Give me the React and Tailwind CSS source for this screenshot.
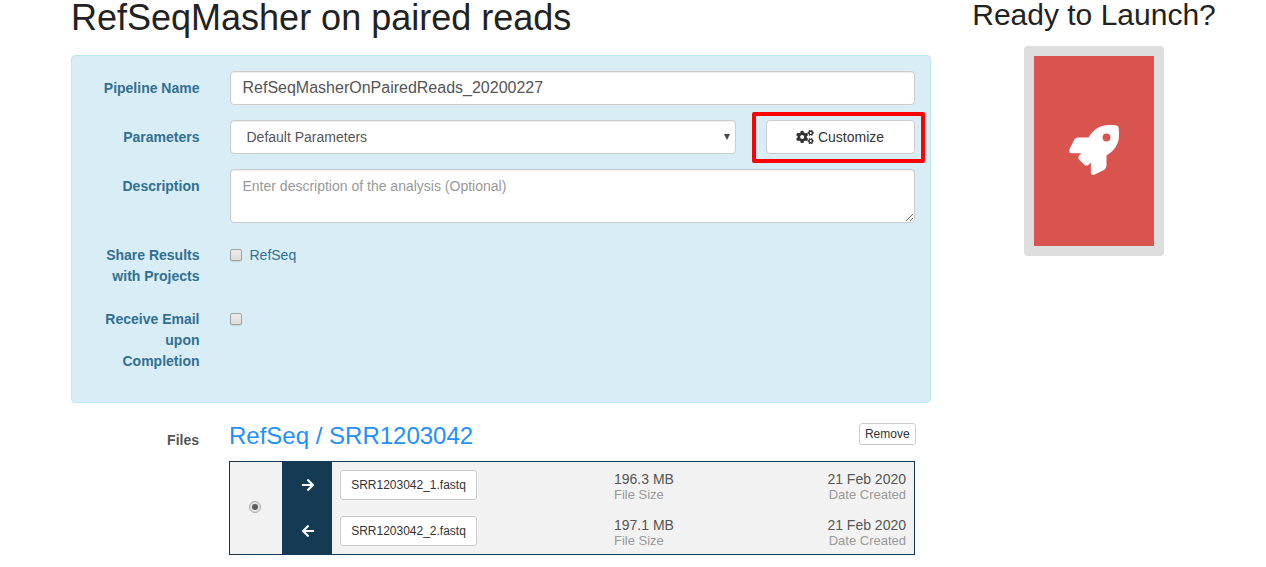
import React from "react";
import { FaRocket, FaCogs, FaArrowRight, FaArrowLeft } from "react-icons/fa";

const files = [
  { name: "SRR1203042_1.fastq", size: "196.3 MB", date: "21 Feb 2020", forward: true },
  { name: "SRR1203042_2.fastq", size: "197.1 MB", date: "21 Feb 2020", forward: false },
];

function Label({ children, className = "" }) {
  return (
    <div className={`w-[128px] shrink-0 pr-[0.5px] text-right text-[14px] leading-[21px] font-bold text-[#31708f] ${className}`}>
      {children}
    </div>
  );
}

function Checkbox() {
  return (
    <input
      type="checkbox"
      className="m-0 h-[12px] w-[12px] shrink-0 appearance-none rounded-[2px] border border-[#a3a3a3] bg-linear-to-b from-[#ededed] to-[#dcdcdc] shadow-[0_1px_0_rgba(0,0,0,0.08)]"
    />
  );
}

const field = "rounded-[4px] border border-[#cccccc] bg-white shadow-[inset_0_1px_1px_rgba(0,0,0,0.075)]";

export default function App() {
  return (
    <div className="flex h-[567px] w-[1266px] overflow-hidden bg-white font-['Liberation_Sans',Arial,sans-serif] text-[14px] text-[#555555]">
      <main className="ml-[71px] w-[860px] shrink-0">
        <h1 className="h-[55px] text-[36px] leading-[36px] whitespace-nowrap text-[#222222]">RefSeqMasher on paired reads</h1>

        <section className="h-[348px] rounded-[4px] border border-[#bce8f1] bg-[#d9edf7] pt-[15px] pr-[15px]">
          <div className="flex h-[34px] justify-between">
            <Label className="pt-[7px]">Pipeline Name</Label>
            <input
              type="text"
              defaultValue="RefSeqMasherOnPairedReads_20200227"
              className={`${field} h-[34px] w-[685px] pr-[12px] pl-[11.5px] text-[16px] leading-[22px] text-[#555555] outline-none`}
            />
          </div>

          <div className="mt-[15px] flex h-[34px] justify-between">
            <Label className="pt-[7px]">Parameters</Label>
            <div className="flex w-[685px] justify-between">
              <div className={`${field} flex h-[34px] w-[506px] items-center justify-between pr-[5px] pl-[15.5px]`}>
                <span className="leading-[20px]">Default Parameters</span>
                <svg width="6" height="6" viewBox="0 0 6 6" className="fill-[#444444]">
                  <path d="M0 0h6L3 6z" />
                </svg>
              </div>
              <div className="-mt-[8px] -mr-[10px] h-[51px] w-[173px] shrink-0 rounded-[2px] border-4 border-[#ff0000] pt-[4px] pl-[10px]">
                <button className="flex h-[34px] w-[149px] items-center justify-center gap-[3.5px] rounded-[4px] border border-[#cccccc] bg-white pr-[0.5px] text-[14px] leading-[20px] text-[#333333]">
                  <FaCogs className="h-[14px] w-[18px]" />
                  Customize
                </button>
              </div>
            </div>
          </div>

          <div className="mt-[15px] flex h-[54px] justify-between">
            <Label className="pt-[7px]">Description</Label>
            <textarea
              placeholder="Enter description of the analysis (Optional)"
              className={`${field} h-[54px] w-[685px] resize-y py-[6px] pr-[12px] pl-[11.5px] text-[14px] leading-[20px] outline-none placeholder:text-[#999999]`}
            />
          </div>

          <div className="mt-[22px] flex h-[42px]">
            <Label>
              Share Results
              <br />
              with Projects
            </Label>
            <label className="ml-[30px] flex h-[21px] items-start gap-[7.5px] pt-[4px] text-[#31708f]">
              <Checkbox />
              <span className="-mt-[4px] leading-[21px]">RefSeq</span>
            </label>
          </div>

          <div className="mt-[22px] flex h-[63px]">
            <Label>
              Receive Email
              <br />
              upon
              <br />
              Completion
            </Label>
            <div className="ml-[30px] flex h-[21px] items-start pt-[4px]">
              <Checkbox />
            </div>
          </div>
        </section>

        <section className="flex pt-[20px] pr-[16px]">
          <div className="w-[128px] pt-[7px] text-right text-[14px] leading-[20px] font-bold">Files</div>
          <div className="ml-[30px] w-[686px] shrink-0">
            <div className="flex h-[38px] justify-between">
              <h2 className="text-[24px] leading-[26px] text-[#1e90ff]">RefSeq / SRR1203042</h2>
              <button className="-mr-[1px] h-[22px] w-[57px] rounded-[3px] border border-[#cccccc] bg-white pr-[0.5px] text-[12px] leading-[18px] text-[#333333]">
                Remove
              </button>
            </div>
            <div className="flex h-[94px] border border-[#143b53] bg-[#f2f2f2]">
              <div className="flex w-[52px] items-start justify-center pt-[39px] pr-[2px]">
                <span className="flex h-[12px] w-[12px] items-center justify-center rounded-full border border-[#a9a9a9] bg-[#e3e3e3]">
                  <span className="h-[6px] w-[6px] rounded-full bg-[#5c5c5c]" />
                </span>
              </div>
              <div className="grow">
                {files.map((file) => (
                  <div key={file.name} className="flex h-[46px]">
                    <div className="flex w-[50px] items-center justify-center bg-[#143b53] pl-[1px] text-white">
                      {file.forward ? <FaArrowRight size={14} /> : <FaArrowLeft size={14} />}
                    </div>
                    <div className="w-[282px] pt-[8px] pl-[8px]">
                      <button className="h-[30px] w-[137px] rounded-[3px] border border-[#cccccc] bg-white text-[12px] leading-[18px] text-[#333333]">
                        {file.name}
                      </button>
                    </div>
                    <div className="flex grow justify-between pt-[9px] pr-[8px]">
                      <div>
                        <div className="text-[14px] leading-[17px]">{file.size}</div>
                        <div className="-mt-[1px] text-[13px] leading-[15px] text-[#999999]">File Size</div>
                      </div>
                      <div className="text-right">
                        <div className="text-[14px] leading-[17px]">{file.date}</div>
                        <div className="-mt-[1px] text-[13px] leading-[15px] text-[#999999]">Date Created</div>
                      </div>
                    </div>
                  </div>
                ))}
              </div>
            </div>
          </div>
        </section>
      </main>

      <aside className="ml-[30px] flex w-[266px] flex-col items-center">
        <h2 className="h-[46px] text-[30px] leading-[30px] whitespace-nowrap text-[#222222]">Ready to Launch?</h2>
        <button className="flex h-[210px] w-[140px] items-center justify-center rounded-[4px] border-[10px] border-[#dedede] bg-[#d9534f] pb-[2px] text-white">
          <FaRocket size={50} />
        </button>
      </aside>
    </div>
  );
}
